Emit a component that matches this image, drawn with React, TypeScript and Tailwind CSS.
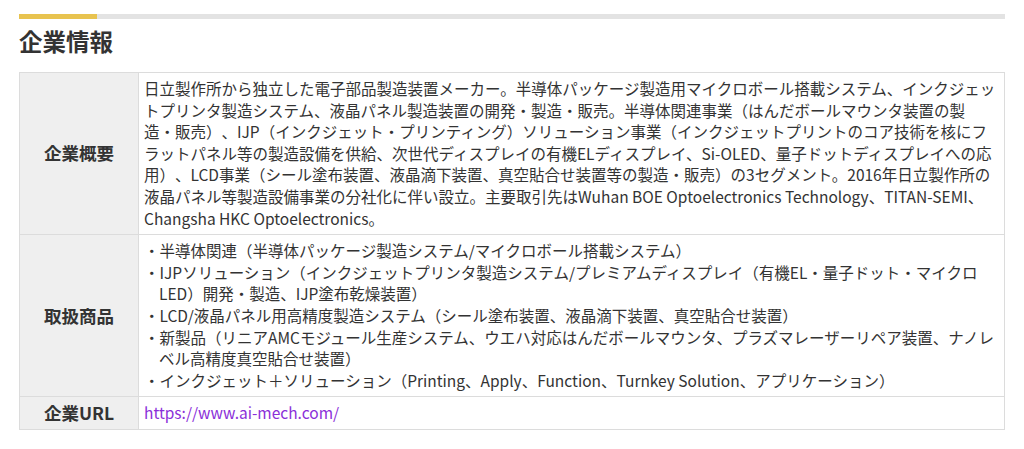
const rows = [
  {
    label: "企業概要",
    body: (
      <p>
        日立製作所から独立した電子部品製造装置メーカー。半導体パッケージ製造用マイクロボール搭載システム、インクジェットプリンタ製造システム、液晶パネル製造装置の開発・製造・販売。半導体関連事業（はんだボールマウンタ装置の製
        <br />
        造・販売）、IJP（インクジェット・プリンティング）ソリューション事業（インクジェットプリントのコア技術を核にフラットパネル等の製造設備を供給、次世代ディスプレイの有機ELディスプレイ、Si-OLED、量子ドットディスプレイへの応用）、LCD事業（シール塗布装置、液晶滴下装置、真空貼合せ装置等の製造・販売）の3セグメント。2016年日立製作所の液晶パネル等製造設備事業の分社化に伴い設立。主要取引先はWuhan BOE Optoelectronics Technology、TITAN-SEMI、Changsha HKC Optoelectronics。
      </p>
    ),
  },
  {
    label: "取扱商品",
    body: (
      <ul>
        {[
          "半導体関連（半導体パッケージ製造システム/マイクロボール搭載システム）",
          "IJPソリューション（インクジェットプリンタ製造システム/プレミアムディスプレイ（有機EL・量子ドット・マイクロLED）開発・製造、IJP塗布乾燥装置）",
          "LCD/液晶パネル用高精度製造システム（シール塗布装置、液晶滴下装置、真空貼合せ装置）",
          "新製品（リニアAMCモジュール生産システム、ウエハ対応はんだボールマウンタ、プラズマレーザーリペア装置、ナノレベル高精度真空貼合せ装置）",
          "インクジェット＋ソリューション（Printing、Apply、Function、Turnkey Solution、アプリケーション）",
        ].map((t) => (
          <li key={t} className="pl-[15px] -indent-[15px]">
            ・{t}
          </li>
        ))}
      </ul>
    ),
  },
  {
    label: "企業URL",
    body: (
      <a href="#" className="text-[#8b2fd9]">
        https://www.ai-mech.com/
      </a>
    ),
  },
];

export default function App() {
  return (
    <div className="w-[1024px] h-[449px] bg-white px-[19px] pt-[14px] text-[#333] font-['Noto_Sans_CJK_JP',sans-serif] [text-spacing-trim:space-all]">
      <div className="flex h-[5px] w-full bg-[#e3e3e3]">
        <div className="w-[78px] bg-[#e8c34f]" />
      </div>
      <h2 className="mt-[6px] text-[23.5px] font-bold leading-[32px] text-[#333]">企業情報</h2>
      <table className="mt-[15px] w-full border-collapse border border-[#dcdcdc]">
        <tbody>
          {rows.map((r) => (
            <tr key={r.label}>
              <th className="w-[119px] border border-[#dcdcdc] bg-[#efefef] text-[17.5px] font-bold text-[#333] align-middle">
                {r.label}
              </th>
              <td className="border border-[#dcdcdc] pl-[5px] pr-[5px] py-[5px] text-[15.5px] leading-[21.6px] align-top">
                {r.body}
              </td>
            </tr>
          ))}
        </tbody>
      </table>
    </div>
  );
}
